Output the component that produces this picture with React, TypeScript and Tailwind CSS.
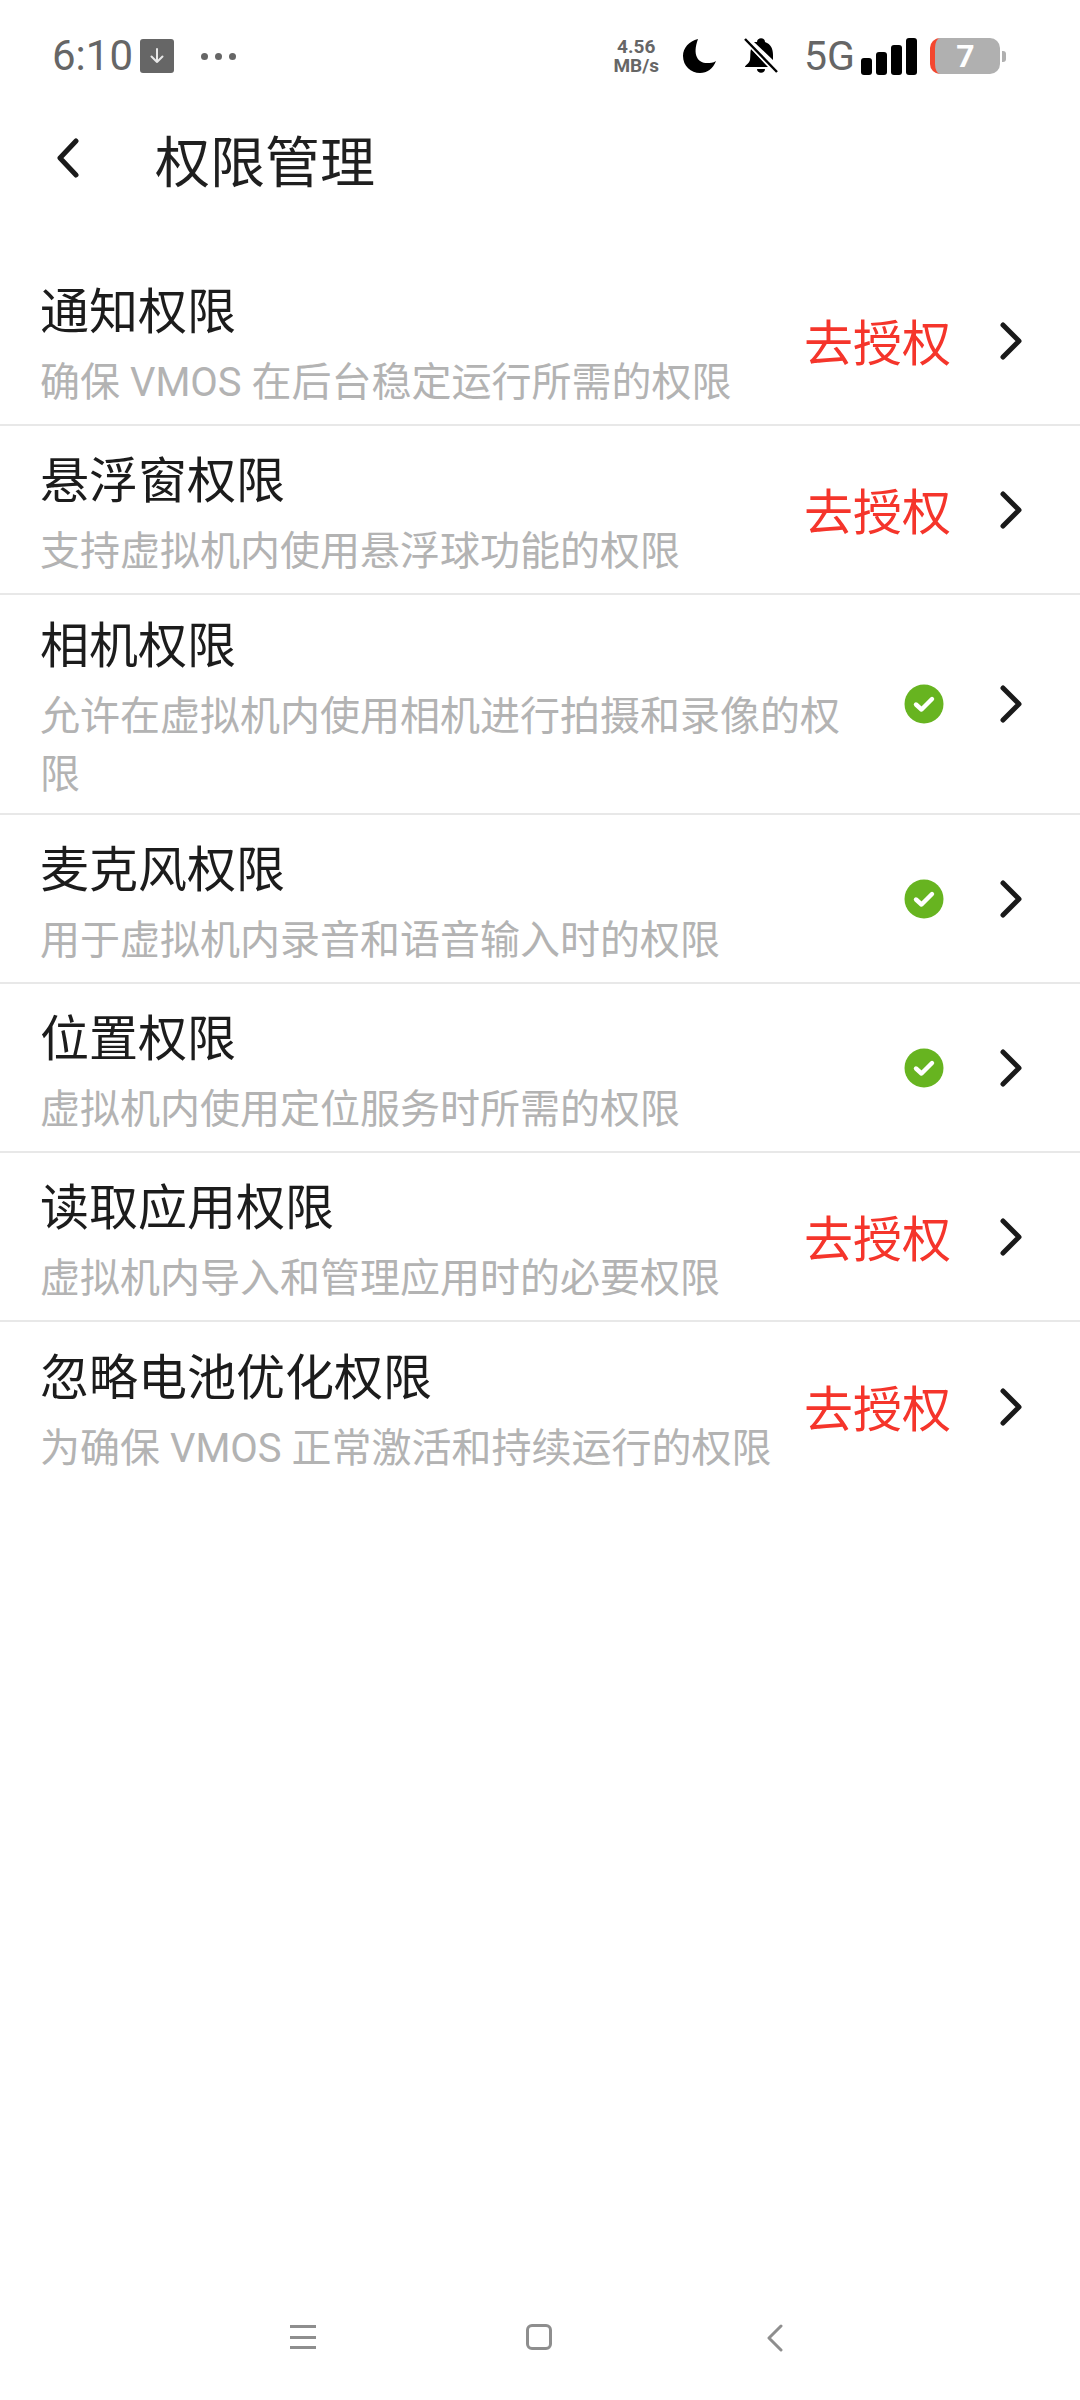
const FONT = "font-['Roboto','Noto_Sans_CJK_SC',sans-serif]"

interface Permission {
  title: string
  desc: string
  granted: boolean
}

const permissions: Permission[] = [
  { title: '通知权限', desc: '确保 VMOS 在后台稳定运行所需的权限', granted: false },
  { title: '悬浮窗权限', desc: '支持虚拟机内使用悬浮球功能的权限', granted: false },
  { title: '相机权限', desc: '允许在虚拟机内使用相机进行拍摄和录像的权限', granted: true },
  { title: '麦克风权限', desc: '用于虚拟机内录音和语音输入时的权限', granted: true },
  { title: '位置权限', desc: '虚拟机内使用定位服务时所需的权限', granted: true },
  { title: '读取应用权限', desc: '虚拟机内导入和管理应用时的必要权限', granted: false },
  { title: '忽略电池优化权限', desc: '为确保 VMOS 正常激活和持续运行的权限', granted: false },
]

function StatusBar() {
  return (
    <div className="flex h-[112px] items-center pl-[52px] pr-[74px] text-[#666666]">
      <span className="text-[42px] leading-none">6:10</span>
      <div className="ml-[7px] flex h-[34px] w-[34px] items-center justify-center rounded-[3px] bg-[#666666]">
        <svg width="20" height="20" viewBox="0 0 20 20" fill="none" stroke="#e8e8e8" strokeWidth="2" strokeLinecap="round" strokeLinejoin="round">
          <path d="M10 3v13M4.5 10.5 10 16l5.5-5.5" />
        </svg>
      </div>
      <div className="ml-[27px] flex gap-[7px]">
        <span className="h-[7px] w-[7px] rounded-full bg-[#666666]" />
        <span className="h-[7px] w-[7px] rounded-full bg-[#666666]" />
        <span className="h-[7px] w-[7px] rounded-full bg-[#666666]" />
      </div>
      <div className="ml-auto flex items-center">
        <div className="flex flex-col items-center text-[19px] font-bold leading-[19px]">
          <span>4.56</span>
          <span>MB/s</span>
        </div>
        <svg className="ml-[24px]" width="33" height="34" viewBox="0 0 33 34" fill="#000">
          <path d="M15 0C6 2 0 9 0 17c0 10 8 17 17 17 7 0 13-4 16-12-3 2-6 2-9 2C15 24 9 16 15 0z" />
        </svg>
        <svg className="ml-[28px]" width="34" height="36" viewBox="0 0 34 36" fill="#000">
          <path d="M13 4c0-5 8-5 8 0 6 2 8 7 8 13v5l-19-18zM7 11l17 18H1c0-2 4-3 5-7 .6-4 0-8 1-11zM13 31h8c0 5-8 5-8 0z" />
          <path d="M1 1l32 33" stroke="#fff" strokeWidth="5" />
          <path d="M1 1l32 33" stroke="#000" strokeWidth="2.4" />
        </svg>
        <span className="ml-[26px] text-[41px] leading-none">5G</span>
        <div className="ml-[6px] flex items-end gap-[4px]">
          <span className="h-[17px] w-[11px] rounded-[3px] bg-black" />
          <span className="h-[23px] w-[11px] rounded-[3px] bg-black" />
          <span className="h-[30px] w-[11px] rounded-[3px] bg-black" />
          <span className="h-[37px] w-[11px] rounded-[3px] bg-black" />
        </div>
        <div className="ml-[13px] flex items-center">
          <div className="flex h-[36px] w-[70px] items-center justify-center rounded-[10px] border-l-[5px] border-[#f4472f] bg-[#b0b0b0] pr-[4px] text-[32px] font-bold leading-[36px] text-white">
            7
          </div>
          <span className="ml-[2px] h-[11px] w-[4px] rounded-r-[3px] bg-[#b0b0b0]" />
        </div>
      </div>
    </div>
  )
}

function Row({ item }: { item: Permission }) {
  return (
    <div className="flex min-h-[169px] items-center border-b-[2px] border-[#e8e8e8] pl-[40px] last:border-b-0">
      <div className="w-[812px] pb-[9px] pt-[16px]">
        <div className="text-[49px] leading-[72px] text-[#1c1c1c]">{item.title}</div>
        <div className="mt-[5px] text-[40px] leading-[58px] text-[#b3b3b3]">{item.desc}</div>
      </div>
      <div className="flex flex-1 items-center justify-end pr-[58px]">
        {item.granted ? (
          <svg className="mr-[56px]" width="40" height="40" viewBox="0 0 40 40">
            <circle cx="20" cy="20" r="19.5" fill="#67b420" />
            <path d="M12 20.5l5.5 5L28 15" fill="none" stroke="#fff" strokeWidth="4.4" strokeLinecap="round" strokeLinejoin="round" />
          </svg>
        ) : (
          <span className="mr-[49px] translate-y-[4px] whitespace-nowrap text-[49px] leading-none text-[#f5352b]">去授权</span>
        )}
        <svg width="22" height="38" viewBox="0 0 22 38" fill="none" stroke="#1a1a1a" strokeWidth="5" strokeLinecap="round" strokeLinejoin="round">
          <path d="M3 3l16 16L3 35" />
        </svg>
      </div>
    </div>
  )
}

export default function App() {
  return (
    <div className={`flex h-[2400px] w-[1080px] flex-col bg-white ${FONT}`}>
      <StatusBar />
      <div className="flex h-[96px] items-center pl-[56px]">
        <svg className="-translate-y-[2px]" width="24" height="40" viewBox="0 0 24 40" fill="none" stroke="#1a1a1a" strokeWidth="5" strokeLinecap="round" strokeLinejoin="round">
          <path d="M20 3 4 20l16 17" />
        </svg>
        <span className="ml-[75px] translate-y-[3px] text-[55px] leading-none text-[#1f1f1f]">权限管理</span>
      </div>
      <div className="mt-[49px]">
        {permissions.map(item => (
          <Row key={item.title} item={item} />
        ))}
      </div>
      {/* Nav bar */}
      <div className="mt-auto flex h-[77px] items-start justify-center pr-[7px] pt-[1px]">
        <div className="flex h-[26px] w-[26px] flex-col justify-between py-[1px]">
          <span className="h-[3px] bg-[#8e8e8e]" />
          <span className="h-[3px] bg-[#8e8e8e]" />
          <span className="h-[3px] bg-[#8e8e8e]" />
        </div>
        <div className="ml-[210px] h-[26px] w-[26px] rounded-[6px] border-[3px] border-[#8e8e8e]" />
        <svg className="ml-[215px]" width="16" height="28" viewBox="0 0 16 28" fill="none" stroke="#8e8e8e" strokeWidth="3" strokeLinecap="round" strokeLinejoin="round">
          <path d="M14 2 2 14l12 12" />
        </svg>
      </div>
    </div>
  )
}
